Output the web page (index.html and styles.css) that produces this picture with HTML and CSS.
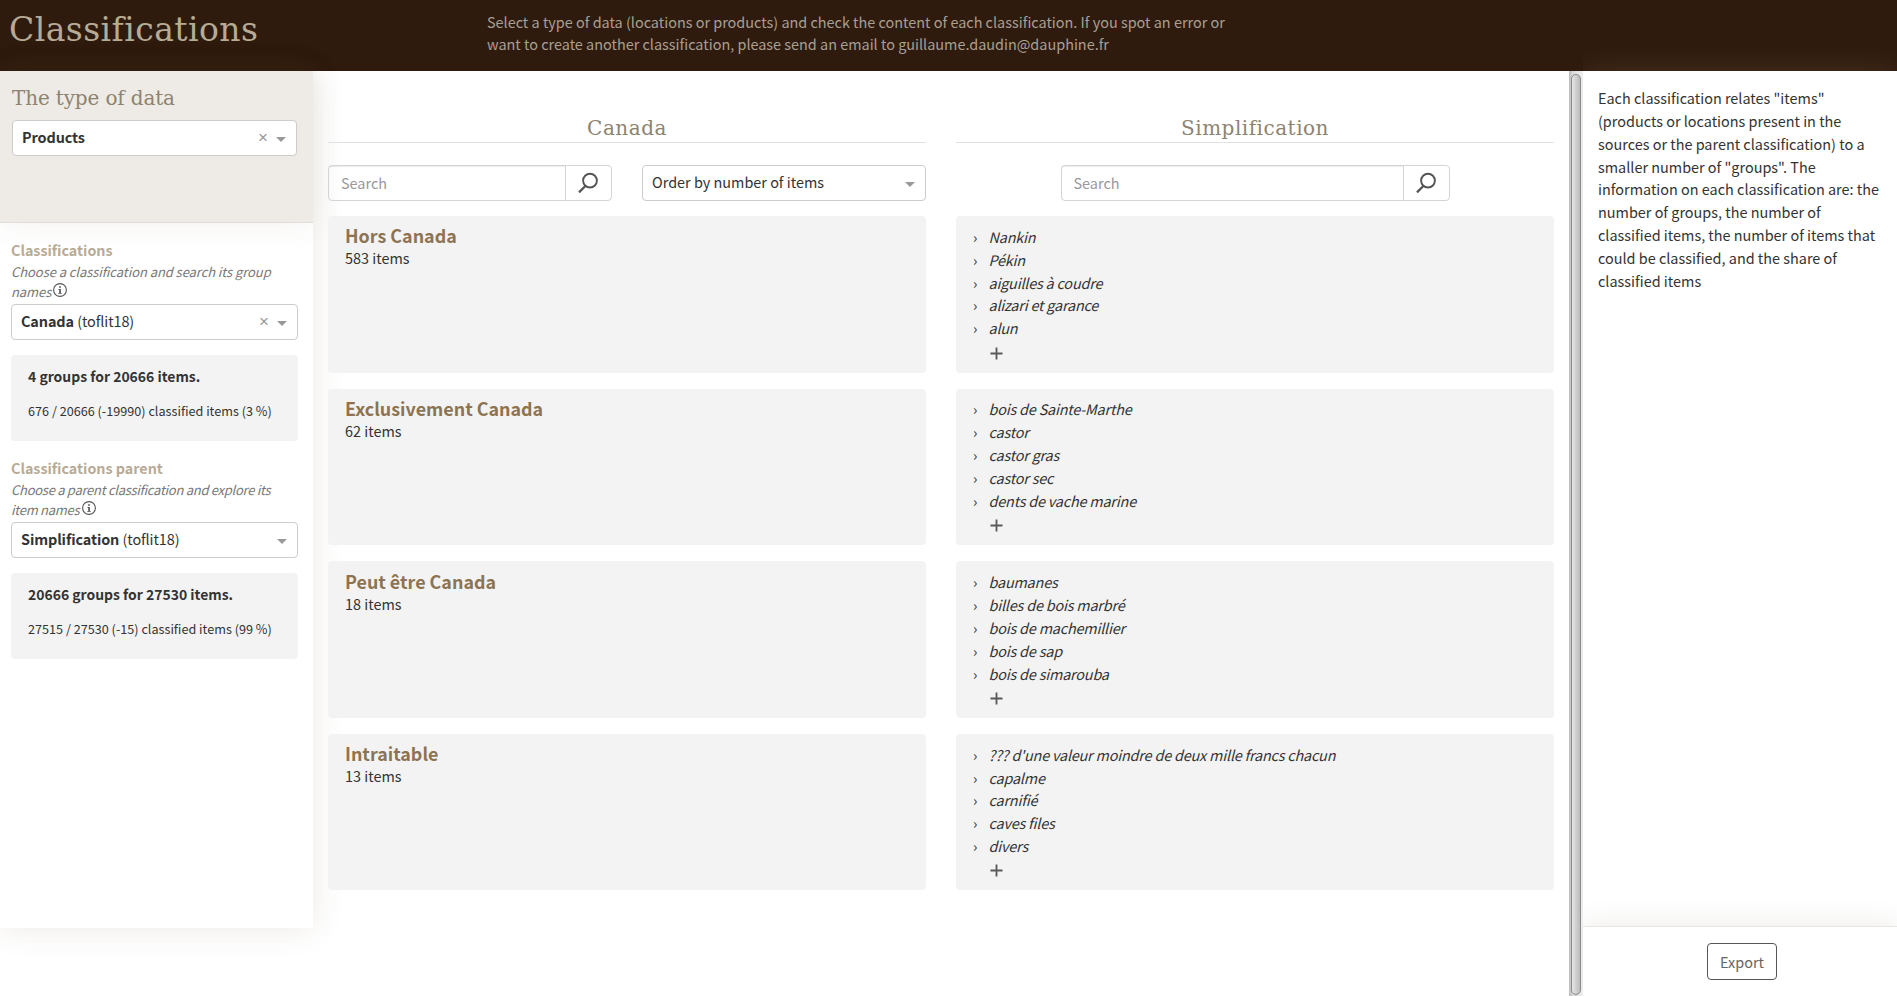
FILE: index.html
```html
<!DOCTYPE html>
<html lang="en">
<head>
<meta charset="utf-8">
<title>Classifications</title>
<link rel="stylesheet" href="styles.css">
</head>
<body>
<svg class="defs" width="0" height="0">
  <symbol id="search" viewBox="0 0 22 22"><circle cx="13" cy="8.6" r="6.9" fill="none" stroke="#555" stroke-width="1.9"/><path d="M8.6 13.8 2 20.4" stroke="#555" stroke-width="2.3" fill="none"/></symbol>
  <symbol id="info" viewBox="0 0 14 14"><circle cx="7" cy="7" r="6.4" fill="none" stroke="#555" stroke-width="1.1"/><path d="M6.2 3.2h1.6v1.5H6.2zM5.4 5.9h2.4v4h.9v.9H5.3v-.9h1V6.8h-.9z" fill="#444"/></symbol>
  <symbol id="plus" viewBox="0 0 14 14"><path d="M7 .5v13M.5 7h13" stroke="#5a5a5a" stroke-width="2" fill="none"/></symbol>
</svg>
<header class="topbar">
  <h1 class="title">Classifications</h1>
  <p class="lead">Select a type of data (locations or products) and check the content of each classification. If you spot an error or<br>want to create another classification, please send an email to guillaume.daudin@dauphine.fr</p>
</header>
<div class="layout">
  <aside class="sidebar">
    <section class="datatype">
      <h2 class="heading">The type of data</h2>
      <div class="select"><b>Products</b><span class="clear">×</span><i class="caret"></i></div>
    </section>
    <section class="group">
      <h3 class="label">Classifications</h3>
      <p class="hint"><span>Choose a classification and search its group</span><br><span>names</span> <svg class="info"><use href="#info"/></svg></p>
      <div class="select"><b>Canada</b>&nbsp;<span class="author">(toflit18)</span><span class="clear">×</span><i class="caret"></i></div>
      <div class="stats"><p class="total">4 groups for 20666 items.</p><p class="detail">676 / 20666 (-19990) classified items (3 %)</p></div>
    </section>
    <section class="group">
      <h3 class="label">Classifications parent</h3>
      <p class="hint tight"><span>Choose a parent classification and explore its</span><br><span>item names</span> <svg class="info"><use href="#info"/></svg></p>
      <div class="select"><b>Simplification</b>&nbsp;<span class="author">(toflit18)</span><i class="caret"></i></div>
      <div class="stats"><p class="total">20666 groups for 27530 items.</p><p class="detail">27515 / 27530 (-15) classified items (99 %)</p></div>
    </section>
  </aside>
  <main class="columns">
    <section class="column">
      <h2 class="heading coltitle">Canada</h2>
      <div class="tools">
        <div class="search"><span class="field">Search</span><span class="go"><svg><use href="#search"/></svg></span></div>
        <div class="select order">Order by number of items<i class="caret"></i></div>
      </div>
      <article class="card"><h3 class="name">Hors Canada</h3><p class="count">583 items</p></article>
      <article class="card"><h3 class="name">Exclusivement Canada</h3><p class="count">62 items</p></article>
      <article class="card"><h3 class="name">Peut être Canada</h3><p class="count">18 items</p></article>
      <article class="card"><h3 class="name">Intraitable</h3><p class="count">13 items</p></article>
    </section>
    <section class="column">
      <h2 class="heading coltitle">Simplification</h2>
      <div class="tools centered">
        <div class="search wide"><span class="field">Search</span><span class="go"><svg><use href="#search"/></svg></span></div>
      </div>
      <article class="card"><ul class="items"><li>Nankin</li><li>Pékin</li><li>aiguilles à coudre</li><li>alizari et garance</li><li>alun</li></ul><svg class="plus"><use href="#plus"/></svg></article>
      <article class="card"><ul class="items"><li>bois de Sainte-Marthe</li><li>castor</li><li>castor gras</li><li>castor sec</li><li>dents de vache marine</li></ul><svg class="plus"><use href="#plus"/></svg></article>
      <article class="card"><ul class="items"><li>baumanes</li><li>billes de bois marbré</li><li>bois de machemillier</li><li>bois de sap</li><li>bois de simarouba</li></ul><svg class="plus"><use href="#plus"/></svg></article>
      <article class="card"><ul class="items"><li>??? d'une valeur moindre de deux mille francs chacun</li><li>capalme</li><li>carnifié</li><li>caves files</li><li>divers</li></ul><svg class="plus"><use href="#plus"/></svg></article>
    </section>
  </main>
  <div class="scrollbar"><div class="thumb"></div></div>
  <aside class="legend">
    <p class="about">Each classification relates "items"<br>(products or locations present in the<br>sources or the parent classification) to a<br>smaller number of "groups". The<br>information on each classification are: the<br>number of groups, the number of<br>classified items, the number of items that<br>could be classified, and the share of<br>classified items</p>
    <footer class="actions"><span class="button">Export</span></footer>
  </aside>
</div>
</body>
</html>
```
FILE: styles.css
```css
* { box-sizing: border-box; }
body {
  margin: 0;
  height: 996px;
  overflow: hidden;
  background: #fff;
  color: #333;
  font: 14.43px/22.86px "Noto Sans CJK SC", "Noto Sans", sans-serif;
}
h1, h2, h3, p, ul { margin: 0; padding: 0; font-weight: 400; }
.defs { position: absolute; }
.topbar { display: flex; height: 71px; background: #2e1b0e; color: #a99f93; }
.title {
  width: 487px;
  padding: 9px 0 0 9px;
  color: #b8ab96;
  font: 33px/42px "DejaVu Serif", serif;
  letter-spacing: .45px;
  white-space: nowrap;
}
.lead { padding-top: 11px; line-height: 22px; white-space: nowrap; }
.layout { display: flex; height: 925px; }
.sidebar { width: 313px; height: 857px; box-shadow: 0 0 30px rgba(100, 75, 45, .12); flex: none; }
.datatype {
  height: 152px;
  padding: 13px 16px 0 12px;
  background: #eeebe6;
  border-bottom: 1px solid #e0deda;
  box-shadow: 0 0 30px rgba(100, 75, 45, .08);
}
.heading {
  color: #8d8370;
  font: 20px/28px "DejaVu Serif", serif;
  white-space: nowrap;
}
.datatype .heading { letter-spacing: -.15px; }
.select {
  display: flex;
  align-items: center;
  height: 36px;
  padding: 0 10px 2px 9px;
  border: 1px solid #ccc;
  border-radius: 4px;
  background: #fff;
  white-space: nowrap;
}
.datatype .select { margin-top: 8px; }
.select b { letter-spacing: -.1px; }
.author { letter-spacing: -.1px; }
.clear { margin: 2px 0 0 auto; color: #999; font: 17px/20px "Liberation Sans", sans-serif; }
.caret {
  margin: 4px 0 0 auto;
  border: 5px solid transparent;
  border-top-color: #999;
  border-bottom: 0;
}
.clear + .caret { margin-left: 8px; }
.group { padding: 15px 15px 0 11px; }
.group + .group { padding-top: 15px; }
.label { height: 24px; color: #b8ab96; font-size: 14.3px; font-weight: 700; line-height: 23px; }
.hint { height: 42px; color: #777; font-size: 13px; font-style: italic; line-height: 20px; white-space: nowrap; }
.hint span { letter-spacing: -.07px; }
.tight span { letter-spacing: -.28px; }
.info { width: 14px; height: 14px; margin-left: -1px; }
.tight .info { margin-left: 0; }
.stats { height: 86px; margin-top: 15px; padding: 10px 17px; border-radius: 4px; background: #f3f3f3; white-space: nowrap; }
.total { font-size: 13.95px; font-weight: 700; }
.detail { margin-top: 12px; font-size: 12.65px; }
.columns { display: flex; gap: 30px; padding-left: 15px; width: 1256px; flex: none; }
.column { width: 598px; }
.coltitle { height: 72px; padding-top: 43px; border-bottom: 1px solid #e2e2e2; letter-spacing: .5px; text-align: center; }
.tools { display: flex; justify-content: space-between; height: 36px; margin: 22px 0 15px; }
.centered { justify-content: center; }
.search { display: flex; width: 284px; border: 1px solid #d4d4d4; border-radius: 4px; }
.wide { width: 389px; }
.field { flex: 1; padding: 6px 12px; color: #999; box-shadow: inset 0 1px 1px rgba(0, 0, 0, .075); }
.go { width: 46px; border-left: 1px solid #d4d4d4; padding: 6px 0 0 11px; }
.go svg { display: block; width: 22px; height: 22px; }
.order { width: 284px; }
.card { height: 156.6px; margin-bottom: 16px; padding: 7.4px 17px; border-radius: 4px; background: #f3f3f3; }
.name { color: #8d7351; font-size: 17.9px; font-weight: 700; line-height: 24px; }
.count { line-height: 22px; }
.items { list-style: none; padding-top: 2.5px; }
.items li { font-style: italic; letter-spacing: -.2px; white-space: nowrap; }
.items li::before { content: "›"; display: inline-block; width: 15.5px; font-style: normal; }
.plus { display: block; width: 13px; height: 13px; margin: 6.4px 0 0 16.6px; }
.scrollbar { width: 14px; padding: 3px 2px 1px; background: linear-gradient(90deg, #bbb, #ddd 30%, #eee); flex: none; }
.thumb { height: 100%; border: 1px solid #8b8b89; border-radius: 5px; background: linear-gradient(90deg, #e6e6e6, #bbb); }
.legend { display: flex; flex: 1; flex-direction: column; box-shadow: 0 0 30px rgba(170, 140, 100, .2); clip-path: inset(-25px 0 0 0); }
.about { flex: 1; padding: 16px 0 0 15px; white-space: nowrap; }
.actions { height: 70px; padding-top: 16px; border-top: 1px solid #e6e6e3; box-shadow: 0 0 30px rgba(70, 50, 20, .1); text-align: center; }
.button { display: inline-block; width: 70px; height: 37px; margin-left: 4px; border: 1px solid #555; border-radius: 4px; color: #666; line-height: 36px; }
```
